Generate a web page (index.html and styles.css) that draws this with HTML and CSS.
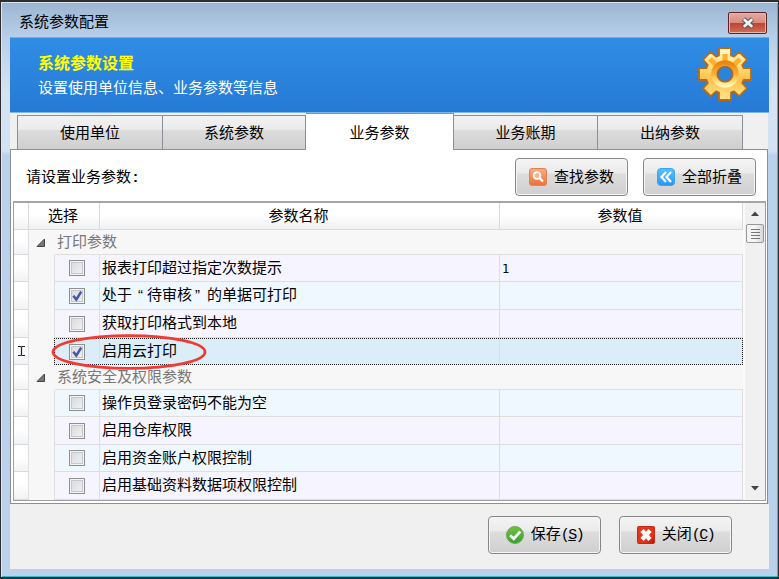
FILE: index.html
```
<!DOCTYPE html>
<html lang="zh-CN">
  <head>
    <meta charset="utf-8" />
    <title>系统参数配置</title>
    <link rel="stylesheet" href="styles.css">
  </head>
  <body>
    <!-- shared shapes -->
    <svg class="defs" width="0" height="0">
      <defs>
        <linearGradient id="gold" x1="0" y1="0" x2="0" y2="1">
          <stop offset="0" stop-color="#fffbd0" />
          <stop offset="0.42" stop-color="#ffd76b" />
          <stop offset="0.6" stop-color="#ffc04c" />
          <stop offset="1" stop-color="#ffe58c" />
        </linearGradient>
        <linearGradient id="ring" x1="0" y1="0" x2="0" y2="1">
          <stop offset="0" stop-color="#ea8512" />
          <stop offset="0.5" stop-color="#ffae35" />
          <stop offset="1" stop-color="#fff6b0" />
        </linearGradient>
        <linearGradient id="orange" x1="0" y1="0" x2="0" y2="1">
          <stop offset="0" stop-color="#f9ad83" />
          <stop offset="1" stop-color="#ed7137" />
        </linearGradient>
        <linearGradient id="blue" x1="0" y1="0" x2="0" y2="1">
          <stop offset="0" stop-color="#58c3ff" />
          <stop offset="1" stop-color="#2697f5" />
        </linearGradient>
        <linearGradient id="green" x1="0" y1="0" x2="0" y2="1">
          <stop offset="0" stop-color="#6fc342" />
          <stop offset="1" stop-color="#38a02c" />
        </linearGradient>
        <linearGradient id="red" x1="0" y1="0" x2="1" y2="1">
          <stop offset="0" stop-color="#e9361b" />
          <stop offset="0.7" stop-color="#e03316" />
          <stop offset="1" stop-color="#b81200" />
        </linearGradient>
        <path id="tick" d="M3.3 6.8 L6.3 10.6 L11.2 2.6" fill="none" stroke="#4357a3" stroke-width="2.5" />
      </defs>
    </svg>

    <div class="window">
      <div class="titlebar">
        <span class="title">系统参数配置</span>
        <button class="close">
          <svg width="14" height="12" viewBox="0 0 14 12">
            <path d="M2.5 2 L11.5 10 M11.5 2 L2.5 10" stroke="#53565f" stroke-width="4.8" />
            <path d="M2.8 2.3 L11.2 9.7 M11.2 2.3 L2.8 9.7" stroke="#f2f2f2" stroke-width="2.8" />
          </svg>
        </button>
      </div>

      <div class="banner">
        <div>
          <div class="banner-title">系统参数设置</div>
          <div class="banner-text">设置使用单位信息、业务参数等信息</div>
        </div>
        <svg class="gear" width="56" height="56" viewBox="-28 -28 56 56">
          <g stroke="#b66b14" stroke-width="1.8" stroke-linejoin="round">
            <path fill="url(#gold)" d="M-6 -26 H6 V-18.5 L9 -17.3 L14.2 -22.1 L22 -14.3 L17.2 -9 L18.5 -6 H26 V6 H18.5 L17.2 9 L22 14.3 L14.2 22.1 L9 17.3 L6 18.5 V26 H-6 V18.5 L-9 17.3 L-14.2 22.1 L-22 14.3 L-17.2 9 L-18.5 6 H-26 V-6 H-18.5 L-17.2 -9 L-22 -14.3 L-14.2 -22.1 L-9 -17.3 L-6 -18.5 Z" />
          </g>
          <path fill="none" stroke="#ffb02f" stroke-width="5" d="M0 -20 V-13 M-15 -15 L-9 -9 M15 -15 L9 -9" />
          <circle r="11.3" fill="none" stroke="url(#ring)" stroke-width="5" />
          <circle r="7.6" fill="#2b84dc" stroke="#a66a26" stroke-width="2" />
        </svg>
      </div>

      <div class="tabs">
        <div class="tab first">使用单位</div>
        <div class="tab second">系统参数</div>
        <div class="tab active">业务参数</div>
        <div class="tab">业务账期</div>
        <div class="tab last">出纳参数</div>
      </div>

      <div class="page">
        <div class="toolbar">
          <span class="hint">请设置业务参数<span class="colon">:</span></span>
          <button class="btn">
            <svg width="18" height="18" viewBox="0 0 18 18">
              <rect x="0.5" y="0.5" width="17" height="17" rx="2.5" fill="url(#orange)" stroke="#e48250" />
              <circle cx="8" cy="7.5" r="3.4" fill="#f6b48f" stroke="#fff" stroke-width="1.8" />
              <path d="M10.5 10 L14 13.5" stroke="#fff" stroke-width="2.4" />
            </svg>
            <span>查找参数</span>
          </button>
          <button class="btn">
            <svg width="18" height="18" viewBox="0 0 18 18">
              <rect x="0.5" y="0.5" width="17" height="17" rx="3.5" fill="url(#blue)" stroke="#37a5f7" />
              <path d="M9 4 L4.5 9 L9 14 M14 4 L9.5 9 L14 14" fill="none" stroke="#fff" stroke-width="2.2" />
            </svg>
            <span>全部折叠</span>
          </button>
        </div>

        <div class="grid">
          <div class="rows">
            <div class="row head">
              <div class="mark"></div>
              <div class="select">选择</div>
              <div class="name">参数名称</div>
              <div class="value">参数值</div>
            </div>

            <div class="row group">
              <div class="mark"></div>
              <svg class="arrow" width="10" height="10"><path d="M8.5 1 V8.5 H1 Z" fill="#777" stroke="#444" /></svg>
              <span class="label">打印参数</span>
            </div>
            <div class="row lilac">
              <div class="mark"></div>
              <div class="check"><span class="box"></span></div>
              <div class="name">报表打印超过指定次数提示</div>
              <div class="value"><span class="digit">1</span></div>
            </div>
            <div class="row tall">
              <div class="mark"></div>
              <div class="check"><span class="box"><svg width="14" height="14"><use href="#tick" /></svg></span></div>
              <div class="name">处于<span class="quote left">“</span>待审核<span class="quote">”</span>的单据可打印</div>
              <div class="value"></div>
            </div>
            <div class="row tall lilac">
              <div class="mark"></div>
              <div class="check"><span class="box"></span></div>
              <div class="name">获取打印格式到本地</div>
              <div class="value"></div>
            </div>
            <div class="row current">
              <div class="mark">
                <svg width="9" height="12"><path d="M1 1.5 H3.5 L4.5 2 L5.5 1.5 H8 M4.5 2 V10 M1 10.5 H3.5 L4.5 10 L5.5 10.5 H8" fill="none" stroke="#222" stroke-width="1.2" /></svg>
              </div>
              <div class="check">
                <span class="box"><svg width="14" height="14"><use href="#tick" /></svg></span>
              </div>
              <div class="name">启用云打印</div>
              <div class="value"></div>
              <svg class="circle" width="156" height="38"><ellipse cx="78" cy="19" rx="76" ry="16.4" fill="none" stroke="#f23a35" stroke-width="2.8" /></svg>
            </div>

            <div class="row group">
              <div class="mark"></div>
              <svg class="arrow" width="10" height="10"><path d="M8.5 1 V8.5 H1 Z" fill="#777" stroke="#444" /></svg>
              <span class="label">系统安全及权限参数</span>
            </div>
            <div class="row">
              <div class="mark"></div>
              <div class="check"><span class="box"></span></div>
              <div class="name">操作员登录密码不能为空</div>
              <div class="value"></div>
            </div>
            <div class="row tall lilac">
              <div class="mark"></div>
              <div class="check"><span class="box"></span></div>
              <div class="name">启用仓库权限</div>
              <div class="value"></div>
            </div>
            <div class="row">
              <div class="mark"></div>
              <div class="check"><span class="box"></span></div>
              <div class="name">启用资金账户权限控制</div>
              <div class="value"></div>
            </div>
            <div class="row tall lilac">
              <div class="mark"></div>
              <div class="check"><span class="box"></span></div>
              <div class="name">启用基础资料数据项权限控制</div>
              <div class="value"></div>
            </div>
          </div>

          <div class="scrollbar">
            <svg width="8" height="5"><path d="M0 5 L4 0.5 L8 5 Z" fill="#444" /></svg>
            <div class="thumb">
              <svg width="9" height="12"><path d="M0 1.5 H9 M0 4.5 H9 M0 7.5 H9 M0 10.5 H9" stroke="#777" stroke-width="1" /></svg>
            </div>
            <svg class="down" width="8" height="5"><path d="M0 0 L4 4.5 L8 0 Z" fill="#444" /></svg>
          </div>
        </div>
      </div>

      <div class="footer">
        <button class="btn">
          <svg width="18" height="18" viewBox="0 0 18 18">
            <circle cx="9" cy="9" r="8.5" fill="url(#green)" stroke="#68a957" />
            <path d="M4 9.2 L7.8 12.8 L14.2 5.6" fill="none" stroke="#fff" stroke-width="2.8" />
          </svg>
          <span>保存<span class="key">(<u>S</u>)</span></span>
        </button>
        <button class="btn">
          <svg width="18" height="18" viewBox="0 0 18 18">
            <rect x="0.5" y="0.5" width="17" height="17" rx="1" fill="url(#red)" stroke="#c62a12" />
            <path d="M5 4.5 L13 13.5 M13 4.5 L5 13.5" stroke="#fff" stroke-width="4.4" />
          </svg>
          <span>关闭<span class="key">(<u>C</u>)</span></span>
        </button>
      </div>
    </div>
  </body>
</html>
```

FILE: styles.css
```
* {
  box-sizing: border-box;
}
body {
  margin: 0;
  font-family: "Liberation Sans", "Noto Sans CJK SC", sans-serif;
  font-size: 15px;
  line-height: 18px;
  color: #000;
}
.defs {
  position: absolute;
}
svg {
  display: block;
  flex: none;
}
button {
  font: inherit;
  color: inherit;
  padding: 0;
}
.window {
  width: 779px;
  height: 579px;
  padding: 0 8px 8px;
  border: 1px solid #302d2e;
  border-top-width: 2px;
  border-bottom-width: 2px;
  background: linear-gradient(#9bb5d1 0, #b7cfe8 34px, #d5e3f3 90px, #d3e2f3 149px, #b9d1ea 153px);
  box-shadow: inset 1px 1px 0 #d8e7f5, inset -1px -1px 0 #2fb9ce;
  display: flex;
  flex-direction: column;
}

/* title bar */
.titlebar {
  height: 35px;
  flex: none;
  padding: 0 3px 0 10px;
  display: flex;
  justify-content: space-between;
  align-items: center;
}
.title {
  padding-top: 5px;
}
.close {
  width: 39px;
  height: 22px;
  margin-top: 7px;
  display: flex;
  align-items: center;
  justify-content: center;
  border: 1px solid #5a2428;
  border-radius: 2px;
  background: linear-gradient(#e5aaa0 0, #d98c80 48%, #be432e 50%, #cf6f5b 100%);
  box-shadow: inset 0 0 0 1px #e9b5ab;
}

/* banner */
.banner {
  height: 76px;
  flex: none;
  margin: 0 1px;
  padding: 0 16px 0 28px;
  border-top: 1px solid #6aaeec;
  border-bottom: 1px solid #7fb5ea;
  background: linear-gradient(#2f8de4, #267ad6);
  display: flex;
  justify-content: space-between;
  color: #fff;
}
.banner-title {
  margin-top: 17px;
  font-size: 16px;
  font-weight: bold;
  color: #ffff00;
}
.banner-text {
  margin-top: 6px;
}
.gear {
  margin-top: 8px;
}

/* tabs */
.tabs {
  height: 37px;
  flex: none;
  margin: 0 2px 0 1px;
  padding-left: 7px;
  display: flex;
  align-items: flex-end;
  background: #f0f0f0;
  box-shadow: inset 0 -1px 0 #8c8e98;
}
.tab {
  width: 144px;
  height: 35px;
  line-height: 34px;
  text-align: center;
  border: 1px solid #8c8e98;
  border-left: 0;
  background: linear-gradient(#f2f2f2 0, #ebebeb 40%, #dcdcdc 44%, #cfcfcf 100%);
}
.tab.first {
  width: 146px;
  border-left: 1px solid #8c8e98;
}
.tab.second {
  width: 143px;
}
.tab.active {
  width: 148px;
  height: 37px;
  line-height: 38px;
  border-bottom: 0;
  background: #fff;
}
.tab.last {
  width: 145px;
}

/* tab page */
.page {
  height: 354px;
  flex: none;
  margin: 0 2px 0 1px;
  padding: 0 1px 2px 2px;
  background: #fff;
  border: 1px solid #8c8e98;
  border-top: 0;
}
.toolbar {
  height: 51px;
  display: flex;
  align-items: center;
  gap: 15px;
  padding: 2px 10px 0 13px;
}
.hint {
  flex: 1;
}
.colon {
  font-weight: bold;
  padding-left: 2px;
}
.btn {
  width: 113px;
  height: 38px;
  display: flex;
  align-items: center;
  justify-content: center;
  gap: 7px;
  border: 1px solid #878787;
  border-radius: 4px;
  background: linear-gradient(#f4f4f4 0, #ebebeb 38%, #dddddd 42%, #cfcfcf 100%);
  box-shadow: inset 0 0 0 1px #f5f5f5;
}
.key {
  font-family: "Liberation Mono", monospace;
  letter-spacing: -1.5px;
}

/* parameter grid */
.grid {
  height: 300px;
  display: flex;
  border: 1px solid #a0a0a0;
  border-top: 2px solid #a6a6a6;
  background: #f7f7f7;
}
.rows {
  flex: 1;
}
.row {
  position: relative;
  height: 27px;
  display: flex;
}
.row.tall {
  height: 28px;
}
.mark {
  width: 15px;
  display: flex;
  align-items: center;
  justify-content: center;
  border-right: 1px solid #e0e0e0;
  border-bottom: 1px solid #d8dade;
  background: linear-gradient(#fff 45%, #f1f2f4 100%);
}
.select {
  width: 71px;
  line-height: 26px;
  border-right: 1px solid #d9dade;
  border-bottom: 1px solid #d9dade;
}
.group {
  height: 25px;
  align-items: center;
  color: #777;
}
.group .mark {
  align-self: stretch;
}
.group::after {
  content: "";
  position: absolute;
  left: 41px;
  right: 0;
  bottom: 0;
  border-bottom: 1px solid #dedede;
}
.arrow {
  margin: 0 11px 0 7px;
}
.label {
  padding-bottom: 2px;
}
.check {
  width: 46px;
  margin-left: 25px;
  display: flex;
  align-items: center;
  justify-content: center;
  border-left: 1px solid #dedede;
}
.check,
.name,
.value {
  line-height: 26px;
  border-right: 1px solid #dedede;
  border-bottom: 1px solid #dedede;
  background: #eff7ff;
}
.name {
  width: 400px;
  padding-left: 2px;
}
.value {
  flex: 1;
  padding-left: 2px;
}
.head .mark,
.head .select,
.head .name,
.head .value {
  padding: 0 2px 0 0;
  text-align: center;
  background: linear-gradient(#fff 45%, #f0f1f3 100%);
  border-color: #d9dade;
}
.lilac .check,
.lilac .name,
.lilac .value {
  background: #f6f4fe;
}
.current .check,
.current .name,
.current .value {
  background: #dbedf7;
  border-bottom: 0;
}
.current::after {
  content: "";
  position: absolute;
  left: 40px;
  right: 0;
  top: 0;
  bottom: 0;
  border: 1px dotted #222;
}
.box {
  width: 16px;
  height: 16px;
  border: 1px solid #8e8f8f;
  background: linear-gradient(135deg, #d5d8db, #f3f3f3);
  box-shadow: inset 0 0 0 1px #f4f4f4, inset 0 0 0 2px #c5c9cd;
}
.digit {
  font-family: "DejaVu Sans Mono", monospace;
  font-size: 12px;
}
.quote {
  display: inline-block;
  width: 15px;
  padding-left: 3px;
}
.quote.left {
  padding-left: 6px;
}
/* red marker round the current row */
.circle {
  position: absolute;
  left: 37px;
  top: -5px;
  z-index: 1;
}

.scrollbar {
  width: 22px;
  padding: 8px 0 9px;
  display: flex;
  flex-direction: column;
  align-items: center;
  background: #f0f0f0;
  border-left: 2px solid #fafafa;
}
.thumb {
  width: 18px;
  height: 19px;
  margin-top: 8px;
  display: flex;
  align-items: center;
  justify-content: center;
  border: 1px solid #999;
  border-radius: 2px;
  background: linear-gradient(90deg, #f5f5f5 50%, #d7d7d7);
}
.down {
  margin-top: auto;
}

/* bottom buttons */
.footer {
  flex: 1;
  margin: 0 1px;
  padding: 12px 37px 0 0;
  display: flex;
  justify-content: flex-end;
  gap: 18px;
  background: #f0f0f0;
}
```
